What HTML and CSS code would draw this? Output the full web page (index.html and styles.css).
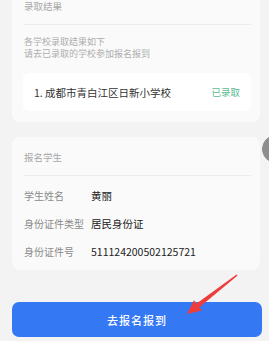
FILE: index.html
```html
<!DOCTYPE html>
<html lang="zh-CN">
<head>
<meta charset="utf-8">
<link rel="stylesheet" href="styles.css">
</head>
<body>
<div class="page">
  <section class="card card-result">
    <div class="card-title">录取结果</div>
    <div class="divider"></div>
    <div class="hint">
      <div>各学校录取结果如下</div>
      <div>请去已录取的学校参加报名报到</div>
    </div>
    <div class="school">
      <span class="school-name">1. 成都市青白江区日新小学校</span>
      <span class="status">已录取</span>
    </div>
  </section>

  <section class="card card-student">
    <div class="card-title">报名学生</div>
    <div class="divider"></div>
    <div class="rows">
      <div class="row"><span class="label">学生姓名</span><span class="value">黄丽</span></div>
      <div class="row"><span class="label">身份证件类型</span><span class="value">居民身份证</span></div>
      <div class="row"><span class="label">身份证件号</span><span class="value">511124200502125721</span></div>
    </div>
  </section>

  <button class="btn">去报名报到</button>
</div>

<div class="float-ball"></div>

<svg class="arrow" width="269" height="341" viewBox="0 0 269 341">
  <polygon fill="#ee3b3b" points="187,314 202,310.5 199.4,307.2 237.6,275.6 236.6,274.4 196.6,303.6 194,300.2"/>
</svg>
</body>
</html>
```

FILE: styles.css
```css
html, body {
  margin: 0;
  padding: 0;
  background: #f3f3f3;
  overflow: hidden;
  width: 269px;
  height: 341px;
  font-family: "Noto Sans CJK SC", "Noto Sans", sans-serif;
}

.page {
  display: flex;
  flex-direction: column;
}

.card {
  background: #fafafa;
  margin: 0 9px 0 12px;
  padding: 0 9px 0 12px;
  border-radius: 8px;
}

.card-result {
  margin-top: -14px;
  padding-bottom: 11px;
}

.card-student {
  margin-top: 15px;
  padding-bottom: 5px;
}

.card-title {
  height: 38px;
  padding-top: 2px;
  box-sizing: border-box;
  display: flex;
  align-items: center;
  font-size: 9.5px;
  color: #a8a8a8;
}

.divider {
  height: 1px;
  background: #ececec;
}

.hint {
  padding-top: 11px;
  font-size: 9px;
  line-height: 12px;
  color: #adadad;
}

.school {
  margin-top: 13px;
  height: 38px;
  background: #ffffff;
  border-radius: 6px;
  display: flex;
  align-items: center;
  justify-content: space-between;
  padding: 0 11px 0 11px;
  margin-left: -1px;
}

.school-name {
  font-size: 10.5px;
  color: #333333;
}

.status {
  font-size: 9.5px;
  color: #5bb98f;
}

.rows {
  padding-top: 5px;
}

.row {
  height: 28px;
  display: flex;
  align-items: center;
}

.label {
  width: 67px;
  font-size: 10px;
  color: #8a8a8a;
}

.value {
  font-size: 10.5px;
  color: #222222;
}

.btn {
  margin: 32px 7px 0 12px;
  height: 35px;
  border: none;
  border-radius: 7px;
  background: #3478f4;
  color: #ffffff;
  font-family: "Noto Sans CJK SC", "Noto Sans", sans-serif;
  font-size: 11px;
  font-weight: 500;
  letter-spacing: 1px;
  padding: 0;
}

.float-ball {
  position: absolute;
  left: 262px;
  top: 135px;
  width: 7px;
  height: 28px;
  background: radial-gradient(circle at 14px 14px, #8e8e8e 13.5px, rgba(142, 142, 142, 0) 14.2px);
}

.arrow {
  position: absolute;
  left: 0;
  top: 0;
  pointer-events: none;
}
```
